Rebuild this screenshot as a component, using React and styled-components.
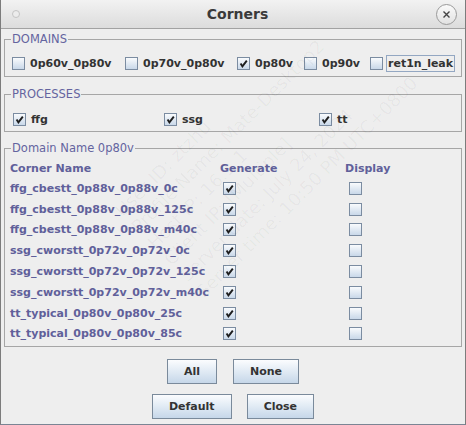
import React from 'react'
import styled, { createGlobalStyle } from 'styled-components'

const Global = createGlobalStyle`
  html, body { margin: 0; padding: 0; background: #eeeeee; }
  body { font-family: "DejaVu Sans", "Liberation Sans", sans-serif; }
`

const Window = styled.div`
  position: relative;
  width: 466px;
  height: 425px;
  box-sizing: border-box;
  border-left: 1px solid #7c7c7c;
  border-right: 1px solid #7c7c7c;
  border-bottom: 1px solid #7a8594;
  background: #eeeeee;
  display: flex;
  flex-direction: column;
  overflow: hidden;
`

const TitleBar = styled.div`
  height: 28px;
  border-bottom: 1px solid #a2a2a2;
  background: linear-gradient(to bottom, #f2f2f2, #dcdcdc);
  display: grid;
  grid-template-columns: 30px 1fr 30px;
  align-items: center;
`

const TitleDot = styled.span`
  width: 6px;
  height: 6px;
  margin-left: 11px;
  border-radius: 50%;
  background: #ececec;
  border: 1px solid #c4c4c4;
`

const TitleText = styled.div`
  text-align: center;
  padding-left: 9px;
  font-weight: bold;
  font-size: 14px;
  color: #3a3a3a;
`

const CloseBtn = styled.span`
  width: 19px;
  height: 19px;
  margin-left: 1px;
  border-radius: 50%;
  border: 1px solid #9a9a9a;
  background: linear-gradient(to bottom, #fafafa, #e2e2e2);
  display: flex;
  align-items: center;
  justify-content: center;
`

const Body = styled.div`
  padding: 4px 3px 0 3px;
  display: flex;
  flex-direction: column;
`

const Group = styled.fieldset`
  margin: ${p => p.$gap || 0}px 0 0 0;
  padding: ${p => p.$pt}px 3px ${p => p.$pb}px 4px;
  border: 1px solid #a6a6a6;
  min-width: 0;
`

const Caption = styled.legend`
  margin-left: 2px;
  padding: 0 1px;
  font-size: 11.5px;
  line-height: 12px;
  color: #64649f;
`

const CheckRow = styled.div`
  display: grid;
  grid-template-columns: ${p => p.$cols};
  height: 20px;
  align-items: center;
  padding-left: ${p => p.$indent}px;
`

const Item = styled.label`
  display: flex;
  align-items: center;
  gap: 3px;
`

const Box = styled.span`
  width: 11px;
  height: 11px;
  flex: none;
  border: 1px solid #7b8ca1;
  background: linear-gradient(to bottom, #f9fbfd, #c9d8e9);
  display: flex;
  align-items: center;
  justify-content: center;
`

const ItemText = styled.span`
  font-weight: bold;
  font-size: 11px;
  color: #333333;
  padding: 1px 1px;
  border: 1px solid ${p => (p.$focus ? '#93a7c2' : 'transparent')};
  white-space: nowrap;
`

const Table = styled.div`
  display: grid;
  grid-template-columns: 210px 125px 1fr;
  grid-template-rows: 18px;
  grid-auto-rows: 20.8px;
  align-items: center;
  padding-left: 1px;
`

const HeadCell = styled.div`
  line-height: 18px;
  font-weight: bold;
  font-size: 11px;
  color: #60609a;
`

const NameCell = styled.div`
  font-weight: bold;
  font-size: 11px;
  color: #60609a;
  white-space: nowrap;
`

const BoxCell = styled.div`
  padding-left: ${p => p.$indent}px;
  display: flex;
`

const ButtonRow = styled.div`
  display: flex;
  justify-content: center;
  gap: ${p => p.$gap}px;
  margin-top: ${p => p.$top}px;
`

const Button = styled.button`
  height: 25px;
  padding: 0 16px;
  border: 1px solid #7a8a9b;
  border-radius: 0;
  background: linear-gradient(to bottom, #fbfcfe 0%, #e3ecf5 45%, #c6d7e9 100%);
  font-family: "DejaVu Sans", "Liberation Sans", sans-serif;
  font-weight: bold;
  font-size: 11px;
  color: #333333;
`

const Watermark = styled.div`
  position: absolute;
  left: 109px;
  top: 205px;
  transform-origin: top left;
  transform: rotate(-45deg);
  pointer-events: none;
  font-size: 18px;
  line-height: 23px;
  color: rgba(0, 0, 0, 0.04);
  white-space: nowrap;
`

function Check({ on }) {
  return (
    <Box>
      {on && (
        <svg width="9" height="9" viewBox="0 0 9 9">
          <path d="M1.6 4.6 L3.4 7.4 L7.8 1.6" fill="none" stroke="#1e1e1e" strokeWidth="1.9" />
        </svg>
      )}
    </Box>
  )
}

const domains = [
  { name: '0p60v_0p80v', on: false },
  { name: '0p70v_0p80v', on: false },
  { name: '0p80v', on: true },
  { name: '0p90v', on: false },
  { name: 'ret1n_leak', on: false, focus: true },
]

const processes = ['ffg', 'ssg', 'tt']

const corners = [
  'ffg_cbestt_0p88v_0p88v_0c',
  'ffg_cbestt_0p88v_0p88v_125c',
  'ffg_cbestt_0p88v_0p88v_m40c',
  'ssg_cworstt_0p72v_0p72v_0c',
  'ssg_cworstt_0p72v_0p72v_125c',
  'ssg_cworstt_0p72v_0p72v_m40c',
  'tt_typical_0p80v_0p80v_25c',
  'tt_typical_0p80v_0p80v_85c',
]

export default function App() {
  return (
    <Window>
      <Global />
      <TitleBar>
        <TitleDot />
        <TitleText>Corners</TitleText>
        <CloseBtn>
          <svg width="9" height="9" viewBox="0 0 9 9">
            <path d="M1.5 1.5 L7.5 7.5 M7.5 1.5 L1.5 7.5" stroke="#444" strokeWidth="1.4" />
          </svg>
        </CloseBtn>
      </TitleBar>
      <Body>
        <Group $pt={8} $pb={3}>
          <Caption>DOMAINS</Caption>
          <CheckRow $cols="113px 112px 67px 66px 1fr" $indent={3}>
            {domains.map(d => (
              <Item key={d.name}>
                <Check on={d.on} />
                <ItemText $focus={d.focus}>{d.name}</ItemText>
              </Item>
            ))}
          </CheckRow>
        </Group>

        <Group $gap={11} $pt={9} $pb={2}>
          <Caption>PROCESSES</Caption>
          <CheckRow $cols="151px 155px 1fr" $indent={4}>
            {processes.map(p => (
              <Item key={p}>
                <Check on />
                <ItemText>{p}</ItemText>
              </Item>
            ))}
          </CheckRow>
        </Group>

        <Group $gap={10} $pt={6} $pb={2}>
          <Caption>Domain Name 0p80v</Caption>
          <Table>
            <HeadCell>Corner Name</HeadCell>
            <HeadCell>Generate</HeadCell>
            <HeadCell>Display</HeadCell>
            {corners.map(c => (
              <React.Fragment key={c}>
                <NameCell>{c}</NameCell>
                <BoxCell $indent={3}><Check on /></BoxCell>
                <BoxCell $indent={4}><Check /></BoxCell>
              </React.Fragment>
            ))}
          </Table>
        </Group>

        <ButtonRow $gap={16} $top={12}>
          <Button>All</Button>
          <Button>None</Button>
        </ButtonRow>
        <ButtonRow $gap={15} $top={10}>
          <Button>Default</Button>
          <Button>Close</Button>
        </ButtonRow>
      </Body>
      <Watermark>
        <div>User ID: ztzhu</div>
        <div>Profile Name: Mate-Desktop2</div>
        <div>Host IP: 16.1.1</div>
        <div>Client IP: [Multiple]</div>
        <div>Server date: July 24, 2024</div>
        <div>Server time: 10:50 PM UTC+0800</div>
      </Watermark>
    </Window>
  )
}
